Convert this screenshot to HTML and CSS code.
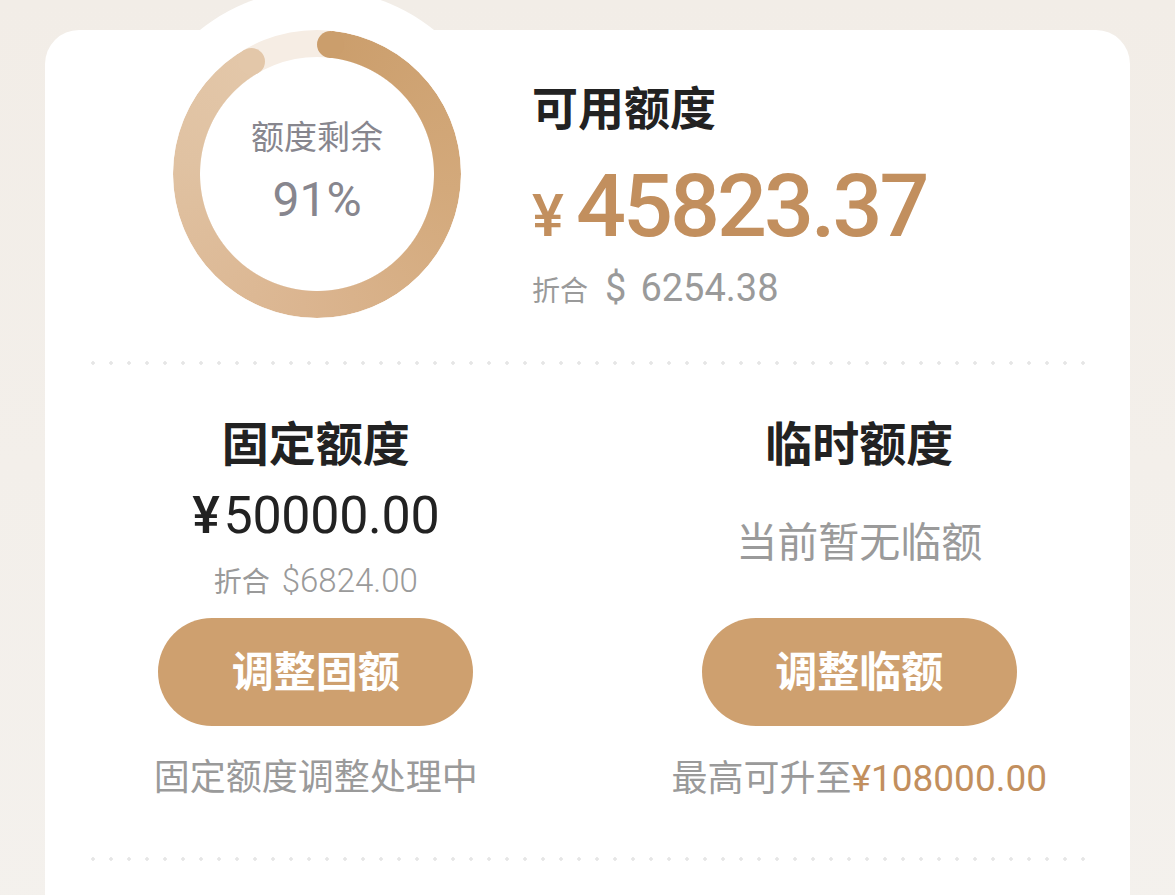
FILE: index.html
```html
<!DOCTYPE html>
<html lang="zh">
<head>
    <meta charset="UTF-8">
    <meta name="viewport" content="width=device-width, initial-scale=1.0">
    <title>额度</title>
    <link rel="stylesheet" href="styles.css">
</head>
<body>
    <div class="page">
        <div class="card">
            <section class="summary">
                <div class="ring">
                    <svg class="ring-track" viewBox="0 0 288 288" width="288" height="288">
                        <circle cx="144" cy="144" r="130.5" fill="none" stroke="#f6ede4" stroke-width="27"/>
                    </svg>
                    <div class="ring-arc"></div>
                    <span class="ring-cap ring-cap-start"></span>
                    <span class="ring-cap ring-cap-end"></span>
                    <div class="ring-label">
                        <div class="ring-title">额度剩余</div>
                        <div class="ring-value">91%</div>
                    </div>
                </div>

                <div class="summary-info">
                    <h2 class="title">可用额度</h2>
                    <div class="amount"><span class="amount-sign">¥</span><span class="amount-num">45823.37</span></div>
                    <div class="converted">
                        <span class="converted-label">折合</span><span class="converted-sign">$</span><span class="converted-num">6254.38</span>
                    </div>
                </div>
            </section>

            <div class="divider"></div>

            <section class="quotas">
                <div class="quota">
                    <h3 class="quota-title">固定额度</h3>
                    <div class="quota-body">
                        <div class="quota-amount"><span class="quota-sign">¥</span>50000.00</div>
                        <div class="quota-converted"><span class="cn">折合</span>$6824.00</div>
                    </div>
                    <button class="quota-btn">调整固额</button>
                    <p class="quota-note">固定额度调整处理中</p>
                </div>
                <div class="quota">
                    <h3 class="quota-title">临时额度</h3>
                    <div class="quota-body">
                        <div class="quota-empty">当前暂无临额</div>
                    </div>
                    <button class="quota-btn">调整临额</button>
                    <p class="quota-note">最高可升至<span class="highlight">¥108000.00</span></p>
                </div>
            </section>

            <div class="divider"></div>
        </div>
    </div>
</body>
</html>
```

FILE: styles.css
```css
body {
    margin: 0;
    background: linear-gradient(#f2ede7, #f4f1ed);
    font-family: Roboto, "Noto Sans CJK SC", sans-serif;
    color: #222;
    overflow: hidden;
}
.page {
    padding: 30px 45px 0;
}
.card {
    background: #fff;
    border-radius: 34px 34px 0 0;
    min-height: 900px;
}

/* top: ring + available amount */
.summary {
    display: flex;
    align-items: flex-start;
    padding-left: 128px;
}
.ring {
    position: relative;
    display: grid;
    width: 288px;
    height: 288px;
}
.ring::before {
    content: "";
    position: absolute;
    left: 50%;
    top: 147px;
    width: 376px;
    height: 376px;
    margin: -188px 0 0 -188px;
    border-radius: 50%;
    background: #fff;
    z-index: -1;
}
.ring-track,
.ring-arc,
.ring-label {
    grid-area: 1 / 1;
}
.ring-arc {
    border-radius: 50%;
    background: conic-gradient(from 6deg, #cb9e6c 0deg, #d3a97b 90deg, #dbb590 180deg, #e0c2a2 270deg, #e3c7a9 324deg, transparent 324deg);
    -webkit-mask: radial-gradient(circle, transparent 116.5px, #000 117.5px, #000 143.5px, transparent 144.5px);
    mask: radial-gradient(circle, transparent 116.5px, #000 117.5px, #000 143.5px, transparent 144.5px);
}
.ring-cap {
    position: absolute;
    width: 27px;
    height: 27px;
    border-radius: 50%;
}
.ring-cap-start {
    left: 144.1px;
    top: 0.7px;
    background: #cb9e6c;
}
.ring-cap-end {
    left: 65.2px;
    top: 17.5px;
    background: #e3c7a9;
}
.ring-label {
    display: flex;
    flex-direction: column;
    align-items: center;
    justify-content: center;
    color: #87868e;
    padding-bottom: 4px;
}
.ring-title {
    font-size: 33px;
    line-height: 1;
}
.ring-value {
    font-size: 48px;
    line-height: 1;
    margin-top: 22px;
}
.summary-info {
    margin-left: 71px;
    padding-top: 56px;
}
.title {
    margin: 0;
    font-size: 46px;
    line-height: 1;
    font-weight: bold;
}
.amount {
    margin-top: 30px;
    line-height: 1;
    color: #c28f5e;
    font-weight: 500;
    white-space: nowrap;
}
.amount-sign {
    font-size: 60px;
    margin-right: 12px;
}
.amount-num {
    font-size: 88px;
    letter-spacing: -3px;
}
.converted {
    margin-top: 19px;
    line-height: 1;
    color: #9a9a9a;
    white-space: nowrap;
}
.converted-label {
    font-size: 28px;
    margin-right: 17px;
}
.converted-sign,
.converted-num {
    font-size: 38px;
}
.converted-sign {
    margin-right: 14px;
}

.divider {
    height: 4px;
    margin: 43px 39px 0;
    background-image: radial-gradient(circle, #e6e6e6 1.5px, transparent 2px);
    background-size: 18px 4px;
}

/* bottom: fixed / temporary */
.quotas {
    display: flex;
    padding-top: 56px;
}
.quota {
    flex: 1;
    display: flex;
    flex-direction: column;
    align-items: center;
}
.quota + .quota {
    margin-left: 2px;
}
.quota-title {
    margin: 0;
    font-size: 47px;
    line-height: 1;
    font-weight: bold;
}
.quota-body {
    height: 150px;
    display: flex;
    flex-direction: column;
    align-items: center;
    justify-content: center;
}
.quota-amount {
    font-size: 52px;
    line-height: 1;
    letter-spacing: -0.3px;
}
.quota-sign {
    font-weight: 500;
    margin-right: 4px;
}
.quota-converted {
    margin-top: 22px;
    font-size: 33px;
    line-height: 1;
    font-weight: 300;
    color: #9a9a9a;
}
.quota-converted .cn {
    font-size: 28px;
    font-weight: 400;
    margin-right: 12px;
}
.quota-empty {
    font-size: 41px;
    line-height: 1;
    color: #9a9a9a;
}
.quota-btn {
    width: 315px;
    height: 108px;
    padding: 0 0 8px;
    border: none;
    border-radius: 54px;
    background: #cea06f;
    color: #fff;
    font-family: inherit;
    font-size: 42px;
    font-weight: bold;
}
.quota-note {
    margin: 34px 0 0;
    font-size: 36px;
    line-height: 1;
    color: #9a9a9a;
    white-space: nowrap;
}
.highlight {
    color: #c28f5e;
    font-size: 37px;
}
.quotas + .divider {
    margin-top: 60px;
}
```
